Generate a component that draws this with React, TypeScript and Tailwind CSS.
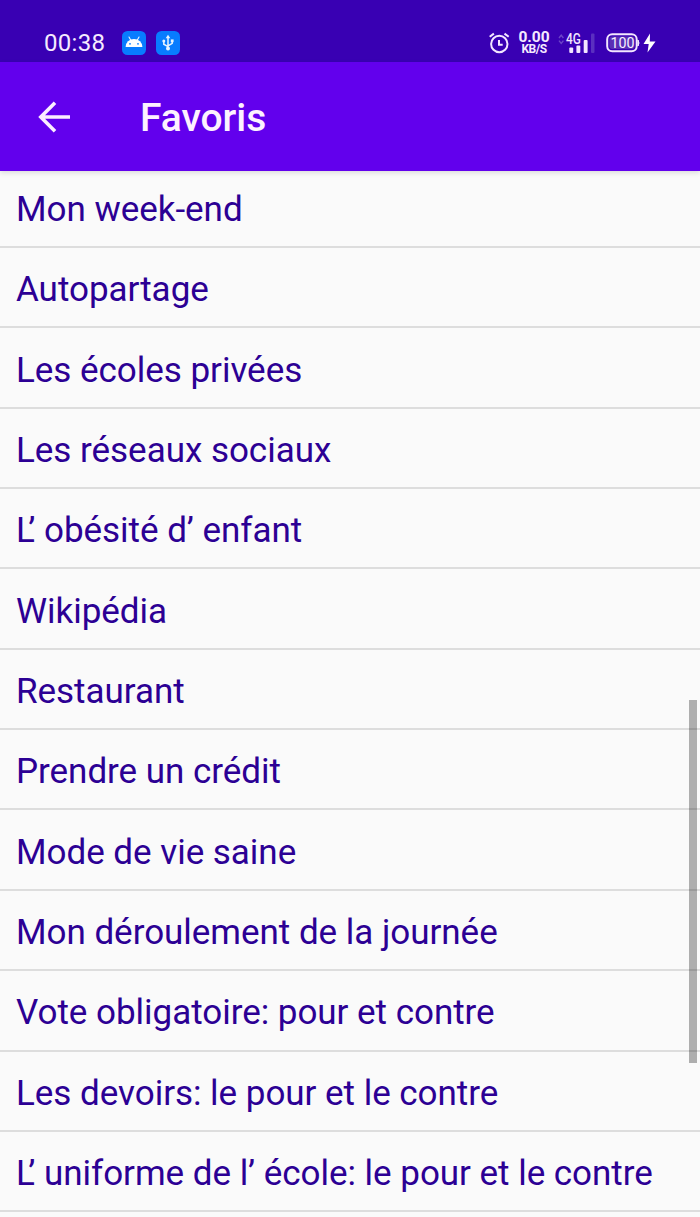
import React from "react";

const favorites: string[] = [
  "Mon week-end",
  "Autopartage",
  "Les écoles privées",
  "Les réseaux sociaux",
  "L’ obésité d’ enfant",
  "Wikipédia",
  "Restaurant",
  "Prendre un crédit",
  "Mode de vie saine",
  "Mon déroulement de la journée",
  "Vote obligatoire: pour et contre",
  "Les devoirs: le pour et le contre",
  "L’ uniforme de l’ école: le pour et le contre",
];

function AndroidBadge() {
  return (
    <svg className="h-6 w-6 shrink-0" viewBox="0 0 24 24">
      <rect width="24" height="24" rx="5.5" fill="#087cff" />
      <path d="M7 6l2.2 4M17 6l-2.2 4" stroke="#eef4ff" strokeWidth="1.1" strokeLinecap="round" />
      <path d="M3.6 16a8.4 8 0 0 1 16.8 0z" fill="#fff" />
      <circle cx="8" cy="12.8" r="0.9" fill="#087cff" />
      <circle cx="16" cy="12.8" r="0.9" fill="#087cff" />
    </svg>
  );
}

function UsbBadge() {
  return (
    <svg className="ml-2.5 h-6 w-6 shrink-0" viewBox="0 0 24 24">
      <rect width="24" height="24" rx="5.5" fill="#087cff" />
      <path d="M12 6v11M12 15.6l-4.200-2.400v-2.500M12 14.800l4.200-2.400V9.800" fill="none" stroke="#e8f3ff" strokeWidth="1.500" />
      <path d="M12 3.800l2.300 3.400H9.700z" fill="#e8f3ff" />
      <circle cx="7.800" cy="10" r="1.500" fill="#e8f3ff" />
      <path d="M14.800 8.400h2.800v2.800h-2.800z" fill="#e8f3ff" />
      <circle cx="12" cy="17.400" r="2" fill="#e8f3ff" />
    </svg>
  );
}

function AlarmIcon() {
  return (
    <svg className="h-[22px] w-[22px] shrink-0" viewBox="0 0 22 22" fill="none" stroke="#f3e6ff" strokeWidth="2">
      <circle cx="11.300" cy="12" r="8.200" />
      <path d="M1.700 4.800l4.200-3.200M20.700 4.800l-4.200-3.200" />
      <path d="M11 8v4.700h3.700" />
    </svg>
  );
}

function SignalIcon() {
  return (
    <svg className="ml-2 h-6 w-[38px] shrink-0" viewBox="0 0 38 24">
      <path d="M1 7l2.2-2.800L5.400 7M1 9.600l2.200 2.800 2.200-2.800" fill="none" stroke="#6d45c8" strokeWidth="1.4" />
      <text x="8" y="12.500" fill="#f3e6ff" fontFamily="Roboto, sans-serif" fontSize="14" fontWeight="500" textLength="14.800" lengthAdjust="spacingAndGlyphs">4G</text>
      <rect x="11.300" y="16.500" width="3.900" height="5.500" rx="1" fill="#f3e6ff" />
      <rect x="18.400" y="14.500" width="3.900" height="7.500" rx="1" fill="#f3e6ff" />
      <rect x="25.700" y="9" width="3.900" height="13" rx="1" fill="#f3e6ff" />
      <rect x="33" y="2.500" width="3.500" height="19.500" rx="1" fill="#5a2fc0" />
    </svg>
  );
}

function BatteryIcon() {
  return (
    <svg className="ml-2.5 h-6 w-[52px] shrink-0" viewBox="0 0 52 24">
      <rect x="1.200" y="3.300" width="29.500" height="17" rx="5" fill="none" stroke="#f3e6ff" strokeWidth="2" />
      <rect x="3.400" y="5.500" width="25.100" height="12.600" rx="3" fill="#5a2fb5" />
      <path d="M32 9q2 3 0 6z" fill="#f3e6ff" stroke="#f3e6ff" />
      <text x="4.500" y="17.200" fill="#f8efff" fontFamily="Roboto, sans-serif" fontSize="15" textLength="24" lengthAdjust="spacingAndGlyphs">100</text>
      <path d="M44 2.500L37.500 13h5.200L41.500 21.500 49.500 10.500h-5.700z" fill="#fff" />
    </svg>
  );
}

function Title({ text }: { text: string }) {
  if (!text.startsWith("L’")) return <span>{text}</span>;
  return (
    <span>
      L<span className="-ml-[6.500px]">{text.slice(1)}</span>
    </span>
  );
}

export default function App() {
  return (
    <div className="relative flex h-[1217px] w-[700px] flex-col overflow-hidden bg-[#fafafa] font-['Roboto',sans-serif]">
      <div className="flex h-[62px] shrink-0 items-center justify-between bg-[#3900b3] pt-6 pr-[42px] pl-11">
        <div className="flex items-center">
          <span className="w-[78px] text-[24px] leading-6 tracking-[0.3px] text-[#f5eaff]">00:38</span>
          <AndroidBadge />
          <UsbBadge />
        </div>
        <div className="flex items-center">
          <AlarmIcon />
          <div className="ml-2 flex w-8 flex-col items-center font-bold text-[#f5eaff]">
            <span className="text-[15.500px] leading-[12px]">0.00</span>
            <span className="text-[12px] leading-[12px] tracking-[-0.500px]">KB/S</span>
          </div>
          <SignalIcon />
          <BatteryIcon />
        </div>
      </div>
      <header className="z-10 flex h-[109px] shrink-0 items-center bg-[#6200ed] pl-[38px] shadow-[0_2px_5px_rgba(0,0,0,0.12)]">
        <svg className="h-8 w-8" viewBox="0 0 32 32" fill="none" stroke="#fbeeff" strokeWidth="3.600">
          <path d="M32 16H4M17 1.800L2.800 16 17 30.200" />
        </svg>
        <h1 className="ml-[70px] pt-[3px] text-[39px] leading-[44px] font-medium tracking-[-0.050px] text-[#fdf2ff]">Favoris</h1>
      </header>
      <ul className="-mt-[3.400px] flex flex-col">
        {favorites.map((title) => (
          <li key={title} className="flex h-[80.360px] shrink-0 items-center border-b-2 border-[#dddddd] pt-[6px] pl-4 text-[35px] leading-[42px] tracking-[-0.030px] whitespace-nowrap text-[#2c0094]">
            <Title text={title} />
          </li>
        ))}
      </ul>
      <div className="absolute top-[700px] right-[3.500px] h-[363px] w-2 bg-black/30" />
    </div>
  );
}
